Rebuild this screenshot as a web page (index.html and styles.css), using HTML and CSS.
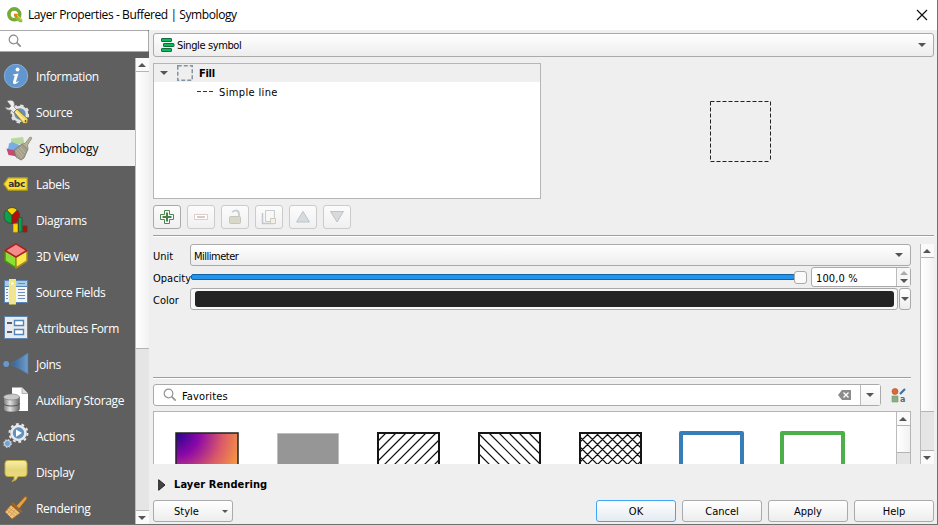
FILE: index.html
```html
<!DOCTYPE html>
<html lang="en">
<head>
<meta charset="utf-8">
<title>Layer Properties</title>
<link rel="stylesheet" href="styles.css">
</head>
<body>
<div class="window">
  <header class="titlebar">
    <svg class="logo" width="16" height="16" viewBox="0 0 16 16"><circle cx="7.3" cy="7.3" r="5.4" fill="none" stroke="#74ab36" stroke-width="3.6"/><path d="M7.5 7.5h3l4.8 5v2.8h-3L7.5 10.5z" fill="#8cc04b"/><path d="M7 6.700h3l1.500 1.500-2 2.500-2.500-2z" fill="#ee7913"/><path d="M10 8l5 5.500" stroke="#f3e04a"/></svg>
    <h1 class="title">Layer Properties - Buffered | Symbology</h1>
    <svg class="close" width="12" height="12" viewBox="0 0 12 12"><path d="M1 1l10 10M11 1L1 11" stroke="#111" stroke-width="1.2"/></svg>
  </header>
  <div class="content">
    <aside class="sidebar">
      <div class="side-search"><svg width="14" height="14" viewBox="0 0 14 14"><circle cx="5.500" cy="5.500" r="4.300" fill="none" stroke="#8b8b8b" stroke-width="1.200"/><path d="M8.700 8.700l4 4" stroke="#8b8b8b" stroke-width="1.700"/></svg></div>
      <div class="side-body">
        <nav class="side-list">
          <div class="item"><svg width="26" height="26" viewBox="0 0 26 26"><circle cx="13" cy="13" r="11.700" fill="#6196cf" stroke="#86b1df"/><circle cx="14.500" cy="6.500" r="2" fill="#fff"/><path d="M10 11.500l5.500-1-2.500 8q-.2 1.300 2.300-.4l.4.700q-2.700 2.700-4.700 2.300-1.500-.5-1-2.300l1.600-5.500q.3-1.200-1.900-.9z" fill="#fff"/></svg><span class="label">Information</span></div>
          <div class="item"><svg width="26" height="26" viewBox="0 0 26 26"><circle cx="17" cy="15" r="7" fill="#6790bb" stroke="#e3e3e3" stroke-width="2.500"/><circle cx="17" cy="15" r="8.600" fill="none" stroke="#e3e3e3" stroke-width="2" stroke-dasharray="3.300 3.450"/><path d="M4 2q5-2 7 1 1 3 0 5l4 4-3 3-4-4q-4 1-6-3l4 1 2-2z" fill="#eee" stroke="#777" stroke-width=".6"/><path d="M11 13l3-3 11 10-.5 4-4 .5z" fill="#f3d660" stroke="#756330" stroke-width=".8"/><path d="M13 13l9 9" stroke="#fff1a5" stroke-width="1.500"/><circle cx="22.500" cy="22" r=".9" fill="#554b2a"/></svg><span class="label">Source</span></div>
          <div class="item selected"><svg width="30" height="26" viewBox="0 0 30 26"><path d="M7 3.500l12-1.500 2 8-14-2z" fill="#b9d8a0"/><path d="M5 8.500l3-1.500 10 4-2 6-12-3z" fill="#78aee6"/><path d="M2.500 13.500l12 2.500 2 6-12-2z" fill="#c94a70"/><path d="M10 15l8-6 6 5-4 9-3 2-5-3z" fill="#a39f8a" stroke="#77766a" stroke-width=".8"/><path d="M12 16l6 7M14 14l5 7M16 12l5 6" stroke="#c5c1ae" stroke-width=".7"/><path d="M18 9l3-.5L26 2l2 1-4.500 7 .5 4z" fill="#b8b29a" stroke="#8d8b77" stroke-width=".8"/></svg><span class="label">Symbology</span></div>
          <div class="item"><svg width="26" height="26" viewBox="0 0 26 26"><path d="M.7 13l4.500-6.200h19V19.200h-19z" fill="#f8df36" stroke="#b19b16" stroke-width="1.200"/><text x="5.200" y="16" class="abc">abc</text></svg><span class="label">Labels</span></div>
          <div class="item"><svg width="26" height="26" viewBox="0 0 26 26"><g stroke="#3b462f" stroke-width=".8"><path d="M9 8.500L3.500 3Q9-2 14.500 3z" fill="#ffd500"/><path d="M9 8.500v8Q1 16 1 9q0-4 2.500-6z" fill="#08a34b"/><path d="M9 8.500L14.500 3Q18 7 16 12q-2 5-7 4.500z" fill="#b90b0b"/><path d="M10.500 17h4v8h-4z" fill="#ffd500" stroke="#eb9f25"/><path d="M15.500 10.500h3.500V25h-3.500z" fill="#08a34b"/><path d="M20 19h4v6h-4z" fill="#b90b0b"/></g></svg><span class="label">Diagrams</span></div>
          <div class="item"><svg width="26" height="26" viewBox="0 0 26 26"><g stroke-width="1.500" stroke-linejoin="round"><path d="M2 7l11 7v11L2 18z" fill="#8ce035" stroke="#518a17"/><path d="M24 7l-11 7v11l11-7z" fill="#fce84c" stroke="#a38d1a"/><path d="M13 .9L24 7.500 13 14 2 7.500z" fill="#f58b8b" stroke="#ae2020"/></g></svg><span class="label">3D View</span></div>
          <div class="item"><svg width="26" height="26" viewBox="0 0 26 26"><path d="M1.500 1.500h23v22h-23z" fill="#f3f5f6" stroke="#5a84b3"/><path d="M2 2h22v5H2z" fill="#a7cce8"/><path d="M2 7.500h22" stroke="#5784b4"/><path d="M15 4.500h7M15 10.500h7M15 13.500h7M15 16.500h7M15 19.500h7M3 10.500h2M3 13.500h2M3 16.500h2M3 19.500h2" stroke="#6790c0"/><path d="M6.700.750h5.500v24H6.700z" fill="#eee1aa" stroke="#f5ee55" stroke-width="1.500"/><circle cx="9.400" cy="4.500" r="1.300" fill="#fff"/></svg><span class="label">Source Fields</span></div>
          <div class="item"><svg width="26" height="26" viewBox="0 0 26 26"><path d="M1.500 1.500h23v22h-23z" fill="#e9eaeb" stroke="#5a84b3"/><path d="M11.500 5.500h9v5h-9zM11.500 14.500h9v5h-9z" fill="#fff" stroke="#5186bd" stroke-width="1.400"/><path d="M4 8h5M4 17h5" stroke="#555e68" stroke-width="1.800"/></svg><span class="label">Attributes Form</span></div>
          <div class="item"><svg width="26" height="26" viewBox="0 0 26 26"><defs><linearGradient id="join"><stop stop-color="#315f95"/><stop offset="1" stop-color="#719dca"/></linearGradient></defs><circle cx="3.200" cy="13" r="2.900" fill="#6799cd"/><path d="M8 13L25 2v21z" fill="url(#join)" stroke="#487bad" stroke-width=".7"/></svg><span class="label">Joins</span></div>
          <div class="item"><svg width="26" height="26" viewBox="0 0 26 26"><defs><linearGradient id="drum"><stop stop-color="#777"/><stop offset=".4" stop-color="#e2e2e2"/><stop offset="1" stop-color="#656565"/></linearGradient></defs><path d="M9 .500h10l6 6V24H9z" fill="#fff"/><path d="M19 .500v6h6" fill="#ddd" stroke="#999" stroke-width=".7"/><path d="M.500 10v12q0 3 8 3t8-3V10z" fill="url(#drum)" stroke="#555" stroke-width=".5"/><ellipse cx="8.500" cy="10" rx="8" ry="3" fill="#c9c9c9" stroke="#777" stroke-width=".6"/><path d="M.500 16q0 3 8 3t8-3" fill="none" stroke="#555" stroke-width="1"/></svg><span class="label">Auxiliary Storage</span></div>
          <div class="item"><svg width="26" height="26" viewBox="0 0 26 26"><circle cx="15.500" cy="10" r="7" fill="#6091c4" stroke="#e9e9e9" stroke-width="2.600"/><circle cx="15.500" cy="10" r="9" fill="none" stroke="#e9e9e9" stroke-width="2" stroke-dasharray="2.800 2.850"/><path d="M13 6.500l6 3.500-6 3.700z" fill="#fff"/><circle cx="4.500" cy="20.500" r="3.200" fill="#70a2d5" stroke="#dae2eb" stroke-width="1"/><circle cx="4.500" cy="20.500" r="4" fill="none" stroke="#c5d5e4" stroke-width="1" stroke-dasharray="1.500 1.640"/></svg><span class="label">Actions</span></div>
          <div class="item"><svg width="26" height="26" viewBox="0 0 26 26"><defs><linearGradient id="bubble" x2="0" y2="1"><stop stop-color="#f7efa9"/><stop offset=".45" stop-color="#e5d777"/><stop offset="1" stop-color="#eadc8b"/></linearGradient></defs><path d="M5 1.500h16q3 0 3 3v10q0 3-3 3h-6q-1 4-6 5 3-2 2-5H5q-3 0-3-3v-10q0-3 3-3z" fill="url(#bubble)" stroke="#c2ac42"/></svg><span class="label">Display</span></div>
          <div class="item"><svg width="26" height="26" viewBox="0 0 26 26"><path d="M13 11L22 1.500q3 0 2 2.500l-8 10z" fill="#e2a04b" stroke="#9a5b13"/><path d="M8 10l9 8-8 6-7-7z" fill="#eec17c" stroke="#b87422"/><path d="M4 15l8 6M6 13l8 6M4 19l7-7M7 21l6-7" stroke="#cc954c" stroke-width=".8"/><path d="M9 8l10 9" stroke="#a76719" stroke-width="2"/></svg><span class="label">Rendering</span></div>
        </nav>
        <div class="scrollbar side-scroll"><div class="arrow-box top"><i class="up"></i></div><div class="thumb"></div><div class="arrow-box bottom"><i class="down"></i></div></div>
      </div>
    </aside>
    <main class="main">
      <div class="combo renderer"><svg width="14" height="14" viewBox="0 0 14 14"><g fill="#08bd5c" stroke="#176a3d"><rect x=".5" y=".5" width="10" height="3" rx=".5"/><rect x="2.500" y="5.500" width="10.500" height="3" rx=".5"/><rect x=".5" y="10.500" width="10" height="3" rx=".5"/></g></svg><span class="ui tight">Single symbol</span><i class="down"></i></div>
      <section class="symbol-top">
        <div class="tree">
          <div class="tree-row root"><i class="down"></i><svg width="16" height="16" viewBox="0 0 16 16"><path d="M.750 .750h14.500v14.500H.750z" fill="none" stroke="#8294a3" stroke-width="1.500" stroke-dasharray="4 2"/></svg><b class="ui fill-name">Fill</b></div>
          <div class="tree-row child"><svg width="16" height="2" viewBox="0 0 16 2"><path d="M0 1.500h16" stroke="#333" stroke-dasharray="4 2"/></svg><span class="ui wide">Simple line</span></div>
        </div>
        <div class="preview"><svg width="61" height="61" viewBox="0 0 61 61"><path d="M.5 .5h60v60M.5 .5v60h60" fill="none" stroke="#222" stroke-dasharray="4 2"/></svg></div>
      </section>
      <div class="tools">
        <button class="tool enabled"><svg width="16" height="16" viewBox="0 0 16 16"><path d="M5.500 1.500h5v4h4v5h-4v4h-5v-4h-4v-5h4z" fill="#fff" stroke="#4b8852"/><path d="M8 3.500v9M3.500 8h9" stroke="#438249" stroke-width="2"/></svg></button>
        <button class="tool"><svg width="16" height="16" viewBox="0 0 16 16"><path d="M1.500 5.500h13v5h-13z" fill="#fff" stroke="#ddcdca"/><path d="M4 8h8" stroke="#dccac6" stroke-width="2"/></svg></button>
        <button class="tool"><svg width="16" height="16" viewBox="0 0 16 16"><path d="M5 3q7-4 7 3v2" fill="none" stroke="#cacfd0" stroke-width="2"/><rect x="2.500" y="7.500" width="11" height="7" rx="1" fill="#d9d7c8" stroke="#c6c5bb"/></svg></button>
        <button class="tool"><svg width="16" height="16" viewBox="0 0 16 16"><path d="M1.500 4v10.500h11" fill="none" stroke="#c2c7ca" stroke-width="1.500"/><path d="M4.500 1.500h9v11h-9z" fill="#f8f8f8" stroke="#c8cccf"/><path d="M9.500 9.500h5v5h-5z" fill="#f3f1e7" stroke="#cfcbbf"/></svg></button>
        <button class="tool"><svg width="16" height="16" viewBox="0 0 16 16"><path d="M8 2.500l6.500 10.500h-13z" fill="#d7dbde" stroke="#bdc3c7"/></svg></button>
        <button class="tool"><svg width="16" height="16" viewBox="0 0 16 16"><path d="M8 13L14.500 2.500h-13z" fill="#d7dbde" stroke="#bdc3c7"/></svg></button>
      </div>
      <div class="rule"></div>
      <section class="properties">
        <div class="property-body">
          <div class="field unit"><label class="ui">Unit</label><div class="combo"><span class="ui tighter">Millimeter</span><i class="down"></i></div></div>
          <div class="field opacity"><label class="ui">Opacity</label><div class="slider"><div class="groove"></div><div class="handle"></div></div><div class="spin"><span class="ui value">100,0 %</span><div class="steps"><i class="up"></i><i class="down"></i></div></div></div>
          <div class="field color"><label class="ui">Color</label><div class="color-button"><div class="swatch"></div></div><div class="color-menu"><i class="down"></i></div></div>
          <div class="rule lower"></div>
          <div class="filter-row">
            <div class="filter"><svg width="14" height="14" viewBox="0 0 14 14"><circle cx="5.500" cy="5.500" r="4.300" fill="none" stroke="#949494" stroke-width="1.200"/><path d="M8.700 8.700l4 4" stroke="#949494" stroke-width="1.700"/></svg><span class="ui value">Favorites</span><svg class="clear" width="13" height="10" viewBox="0 0 13 10"><path d="M0 5l4-5h9v10H4z" fill="#8b8b8b"/><path d="M5.500 2.500l5 5m0-5l-5 5" stroke="#fff" stroke-width="1.300"/></svg><div class="filter-menu"><i class="down"></i></div></div>
            <svg class="manager" width="15" height="15" viewBox="0 0 15 15"><circle cx="4" cy="3.500" r="3" fill="#d66b38" stroke="#b94e1e" stroke-width=".6"/><path d="M9 6l5-5" stroke="#416e9e" stroke-width="2.200"/><path d="M1 8h6v6H1z" fill="#88ae87" stroke="#70a06f" stroke-width=".6"/><text x="9" y="13.500" class="tiny">a</text></svg>
          </div>
          <div class="gallery">
            <div class="symbols">
              <svg width="65" height="34" viewBox="0 0 65 34"><defs><radialGradient id="plasma" gradientUnits="userSpaceOnUse" cx="2" cy="2" r="72"><stop stop-color="#23058d"/><stop offset=".32" stop-color="#8b08a8"/><stop offset=".65" stop-color="#da5a69"/><stop offset="1" stop-color="#fca636"/></radialGradient></defs><path d="M2 2h62v60H2z" fill="url(#plasma)" stroke="#222" stroke-width="1.500"/></svg>
              <svg width="65" height="34" viewBox="0 0 65 34"><path d="M2.500 2.500h61v60h-61z" fill="#969696" stroke="#bebebe"/></svg>
              <svg width="65" height="34" viewBox="0 0 65 34"><path d="M2 10L10 2M2 20L20 2M2 30L30 2M2 40L40 2M2 50L50 2M2 60L60 2M2 70L63 9M2 80L63 19M2 90L63 29" stroke="#111" stroke-width="1.200"/><path d="M2 2h61v62H2z" fill="none" stroke="#151515" stroke-width="2"/></svg>
              <svg width="65" height="34" viewBox="0 0 65 34"><path d="M2 23l20 20M2 13l30 30M2 3l40 40M12 2l41 41M22 2l41 41M32 2l31 31M42 2l21 21M52 2l11 11" stroke="#111" stroke-width="1.200"/><path d="M2 2h61v62H2z" fill="none" stroke="#151515" stroke-width="2"/></svg>
              <svg width="65" height="34" viewBox="0 0 65 34"><path d="M2 11l9-9M2 21L21 2M2 31L31 2M2 41L41 2M2 51L51 2M2 61L61 2M12 61l51-51M22 61l41-41M32 61l31-31M2 26l20 20M2 16l30 30M2 6l40 40M8 2l44 44M18 2l44 44M28 2l35 35M38 2l25 25M48 2l15 15M58 2l5 5" stroke="#111" stroke-width="1.200"/><path d="M2 2h61v62H2z" fill="none" stroke="#151515" stroke-width="2"/></svg>
              <svg width="65" height="34" viewBox="0 0 65 34"><path d="M2 2h61v62H2z" fill="none" stroke="#377eb8" stroke-width="4" stroke-linejoin="round"/></svg>
              <svg width="65" height="34" viewBox="0 0 65 34"><path d="M2 2h61v62H2z" fill="none" stroke="#4daf4a" stroke-width="4" stroke-linejoin="round"/></svg>
            </div>
            <div class="scrollbar gallery-scroll"><div class="arrow-box top"><i class="up"></i></div><div class="thumb"></div></div>
          </div>
        </div>
        <div class="scrollbar property-scroll"><div class="arrow-box top"><i class="up"></i></div><div class="thumb"></div><div class="arrow-box bottom"><i class="down"></i></div></div>
      </section>
      <div class="rendering-group"><svg width="8" height="12" viewBox="0 0 8 12"><path d="M.7.700L7 6 .7 11.300z" fill="#444" stroke="#222"/></svg><b class="ui group-name">Layer Rendering</b></div>
      <footer class="footer"><button class="button style"><span class="ui">Style</span><i class="down small"></i></button><button class="button primary"><span class="ui">OK</span></button><button class="button"><span class="ui">Cancel</span></button><button class="button"><span class="ui">Apply</span></button><button class="button"><span class="ui">Help</span></button></footer>
    </main>
  </div>
</div>
</body>
</html>
```
FILE: styles.css
```css
* { box-sizing: border-box; }
body { margin: 0; overflow: hidden; background: #efefef; color: #000; }
svg { display: block; flex: none; }
.window { width: 938px; height: 525px; border-right: 1px solid #707070; border-bottom: 1px solid #707070; display: flex; flex-direction: column; overflow: hidden; }
.titlebar { height: 30px; flex: none; background: #fff; display: flex; align-items: center; padding: 0 9px 0 7px; }
.title { font: 400 12px/20px "Open Sans", sans-serif; margin: 0 0 0 5px; white-space: nowrap; letter-spacing: -.41px; }
.close { margin-left: auto; margin-top: -1px; }
.content { flex: 1; display: flex; min-height: 0; }
.sidebar { width: 149px; flex: none; display: flex; flex-direction: column; background: #5f5f5f; }
.side-search { height: 22px; flex: none; background: #fff; border: 1px solid #aaa; border-left: 0; border-radius: 0 2px 2px 0; padding: 3px 8px; }
.side-body { display: flex; flex: 1; margin-top: 6px; min-height: 0; }
.side-list { width: 135px; overflow: hidden; }
.item { height: 36px; display: flex; align-items: center; padding-left: 3px; gap: 7px; color: #fff; }
.item.selected { color: #000; background: #f0f0f0; padding-left: 4px; gap: 5px; }
.label { font: 400 12px/18px "Open Sans", sans-serif; white-space: nowrap; margin-top: 2px; letter-spacing: -.34px; }
.selected .label { letter-spacing: -.2px; }
.abc { font: bold 9px "DejaVu Sans", sans-serif; fill: #333; letter-spacing: -.4px; }
.tiny { font: bold 8px "DejaVu Sans", sans-serif; fill: #666; }
.ui { font-family: "DejaVu Sans Condensed", "DejaVu Sans", sans-serif; font-stretch: condensed; font-size: 11px; line-height: 16px; white-space: nowrap; padding-top: 2px; }
.tight { letter-spacing: -.38px; }
.tighter { letter-spacing: -.5px; padding-top: 3px; }
.wide { letter-spacing: .36px; }
.value { letter-spacing: .13px; padding-top: 3px; }
.fill-name { letter-spacing: -.3px; }
.group-name { letter-spacing: .1px; padding-top: 0; }
.up, .down { width: 0; height: 0; display: block; flex: none; border-left: 4px solid transparent; border-right: 4px solid transparent; }
.up { border-bottom: 4px solid #555; }
.down { border-top: 4px solid #555; }
.small { border-left-width: 3px; border-right-width: 3px; border-top-width: 3px; }
.scrollbar { width: 14px; flex: none; background: #e5e5e5; display: flex; flex-direction: column; border-left: 1px solid #bbb; }
.arrow-box { height: 14px; flex: none; background: #fafafa; display: flex; align-items: center; justify-content: center; padding-right: 1px; }
.arrow-box.top { border-bottom: 1px solid #b4b4b4; }
.arrow-box.bottom { border-top: 1px solid #b4b4b4; margin-top: auto; }
.thumb { border-bottom: 1px solid #b4b4b4; background: linear-gradient(90deg, #fff, #f2f2f2); }
.side-scroll .thumb { height: 277px; }
.main { flex: 1; padding: 3px 3px 3px 4px; display: flex; flex-direction: column; min-width: 0; }
.combo { border: 1px solid #aaa; border-radius: 3px; background: linear-gradient(#fff, #ededed); display: flex; align-items: center; }
.combo > .down { margin-left: auto; margin-right: 7px; }
.renderer { height: 24px; flex: none; padding-left: 7px; gap: 2px; }
.symbol-top { height: 136px; flex: none; display: flex; margin-top: 6px; }
.tree { width: 388px; border: 1px solid #b5b5b5; background: #fff; }
.tree-row { height: 18px; display: flex; align-items: center; }
.root { background: #efefef; padding-left: 6px; gap: 6px; }
.root .down { margin-right: 3px; }
.child { padding-left: 43px; gap: 6px; }
.child .ui { padding-top: 3px; }
.preview { flex: 1; padding: 38px 0 0 169px; }
.tools { display: flex; gap: 6px; margin-top: 6px; height: 24px; flex: none; }
.tool { width: 28px; height: 24px; padding: 0; border: 1px solid #cbcbcb; border-radius: 3px; background: linear-gradient(#fcfcfc, #f0f0f0); display: flex; align-items: center; justify-content: center; }
.enabled { border-color: #aaa; }
.rule { height: 2px; flex: none; border-top: 1px solid #9e9e9e; border-bottom: 1px solid #fff; margin-top: 6px; }
.properties { display: flex; height: 220px; flex: none; margin-top: 7px; }
.property-body { width: 758px; margin-right: 9px; display: flex; flex-direction: column; overflow: hidden; }
.field { display: flex; flex: none; align-items: center; }
.field label { width: 37px; flex: none; padding-top: 3px; }
.unit { height: 22px; }
.unit .combo { flex: 1; height: 22px; padding-left: 3px; }
.opacity { height: 22px; }
.slider { width: 617px; display: flex; align-items: center; }
.groove { height: 6px; width: 604px; margin-left: 1px; border: 1px solid #1262a4; border-radius: 2px; background: #2493e9; }
.handle { width: 13px; height: 13px; flex: none; border: 1px solid #aaa; border-radius: 3px; background: #fafafa; margin-left: -1px; }
.spin { width: 100px; height: 20px; margin-left: 4px; border: 1px solid #aaa; border-radius: 3px; background: #fff; display: flex; align-items: center; padding-left: 4px; }
.steps { width: 14px; height: 18px; margin-left: auto; background: #f6f6f6; border-left: 1px solid #bbb; display: flex; flex-direction: column; align-items: center; justify-content: center; gap: 4px; }
.steps .up { border-bottom-color: #aaa; }
.color { height: 22px; }
.color-button { width: 708px; height: 22px; border: 1px solid #aaa; border-radius: 3px; background: #f8f8f8; padding: 2px 3px 3px 4px; }
.swatch { height: 16px; border-radius: 3px; background: #232323; }
.color-menu { width: 12px; height: 22px; margin-left: 1px; border: 1px solid #aaa; border-radius: 3px; background: linear-gradient(#fff, #ededed); display: flex; align-items: center; justify-content: center; }
.lower { margin-top: 67px; }
.filter-row { height: 22px; flex: none; margin-top: 5px; display: flex; align-items: center; }
.filter { width: 728px; height: 22px; background: #fff; border: 1px solid #aaa; border-radius: 3px; display: flex; align-items: center; padding-left: 9px; gap: 5px; }
.clear { margin-left: auto; margin-right: 4px; }
.filter-menu { width: 20px; height: 20px; border-left: 1px solid #bbb; background: linear-gradient(#fff, #f3f3f3); display: flex; align-items: center; justify-content: center; padding-right: 2px; }
.manager { margin-left: 10px; }
.gallery { height: 53px; margin-top: 5px; border: 1px solid #b5b5b5; border-bottom: 0; background: #fff; display: flex; overflow: hidden; }
.symbols { width: 742px; display: flex; gap: 36px; padding: 19px 0 0 20px; }
.gallery-scroll .thumb { height: 27px; }
.property-scroll .thumb { height: 154px; }
.rendering-group { height: 36px; flex: none; display: flex; align-items: center; padding: 5px 0 0 5px; gap: 8px; }
.footer { height: 22px; flex: none; display: flex; gap: 6px; }
.button { width: 80px; height: 22px; padding: 0; border: 1px solid #aaa; border-radius: 3px; background: linear-gradient(#fff, #ededed); display: flex; align-items: center; justify-content: center; color: #000; }
.style { margin-right: auto; padding-left: 20px; justify-content: flex-start; }
.style .down { margin-left: auto; margin-right: 4px; }
.primary { border-color: #3da6f5; background: linear-gradient(#fff, #e4ebf1); }
```
